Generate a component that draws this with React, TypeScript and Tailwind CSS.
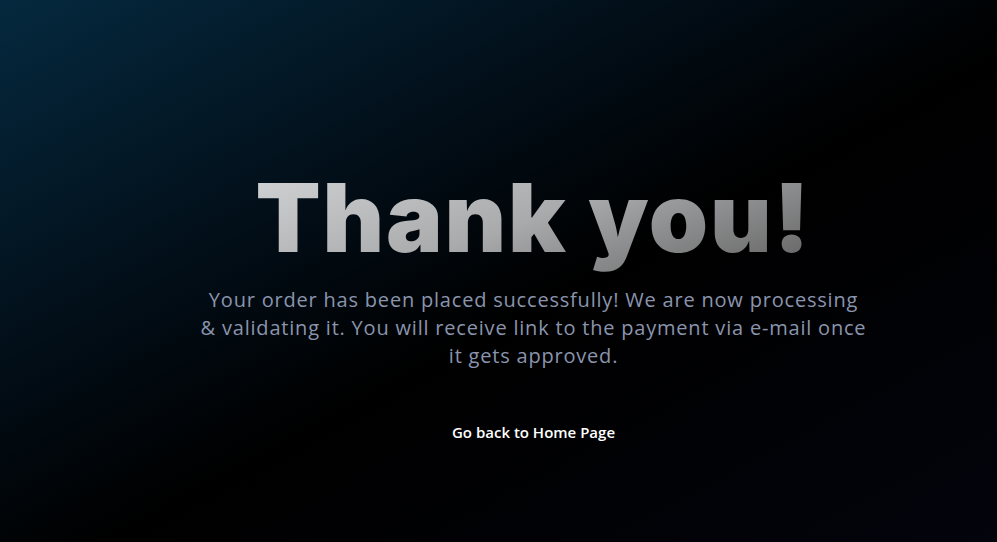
import React from "react";

export default function App() {
  return (
    <div
      className="w-[997px] h-[542px] overflow-hidden flex flex-col items-center bg-[linear-gradient(to_bottom_right,#05293f_0%,#020d16_35%,#000000_55%,#03040c_100%)] pl-[70px]"
      style={{ fontFamily: '"Open Sans", "Liberation Sans", sans-serif' }}
    >
      <h1
        className="mt-[158px] text-[95px] leading-[120px] font-black tracking-[1.8px] bg-[linear-gradient(160deg,#d4d6d8_0%,#a9aaac_50%,#5e5e5e_100%)] bg-clip-text text-transparent"
        style={{ fontFamily: 'Inter, "Open Sans", sans-serif' }}
      >
        Thank you!
      </h1>
      <p className="mt-[8px] text-center text-[20px] leading-[28px] tracking-[0.8px] text-[#8a95ad]">
        Your order has been placed successfully! We are now processing
        <br />
        &amp; validating it. You will receive link to the payment via e-mail once
        <br />
        it gets approved.
      </p>
      <a className="mt-[52px] text-[15px] leading-[20px] font-semibold text-white">
        Go back to Home Page
      </a>
    </div>
  );
}
